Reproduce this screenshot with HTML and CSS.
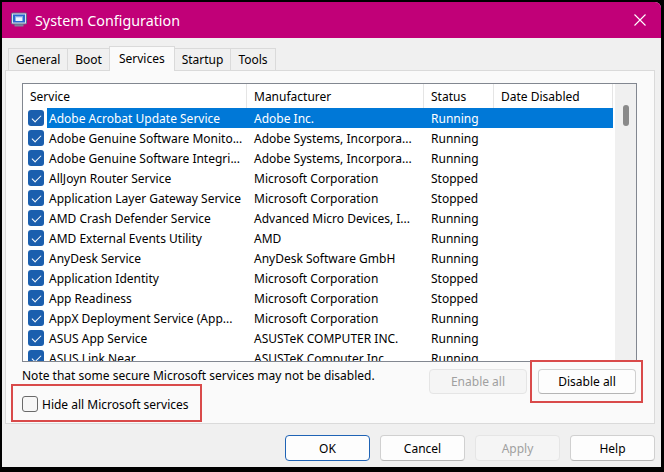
FILE: index.html
```html
<!DOCTYPE html>
<html lang="en">
<head>
    <meta charset="UTF-8">
    <title>System Configuration</title>
    <link rel="stylesheet" href="styles.css">
</head>
<body>
<div class="window">
    <div class="titlebar">
        <svg class="app-icon" viewBox="0 0 16 16">
            <rect x="3.5" y="12" width="9" height="2.5" rx="0.5" fill="#7d869a"/>
            <rect x="0.5" y="1" width="15" height="11" rx="1" fill="#dde3ef" stroke="#5e6b8a"/>
            <rect x="2" y="2.5" width="12" height="8" fill="#2a68d0"/>
            <rect x="4.5" y="4" width="7" height="5" fill="#eef3ff"/>
            <rect x="4.5" y="4" width="7" height="1.3" fill="#7fa6e6"/>
        </svg>
        <span class="title">System Configuration</span>
        <svg class="close" viewBox="0 0 12 12">
            <path d="M0.5 0.5 L11.5 11.5 M11.5 0.5 L0.5 11.5" stroke="#fff" stroke-width="1.1"/>
        </svg>
    </div>

    <div class="client">
        <div class="tabs">
            <div class="tab">General</div>
            <div class="tab">Boot</div>
            <div class="tab active">Services</div>
            <div class="tab">Startup</div>
            <div class="tab">Tools</div>
        </div>

        <div class="panel">
            <div class="listview">
                <div class="list-main">
                    <div class="list-header">
                        <div class="hcell">Service</div>
                        <div class="hcell">Manufacturer</div>
                        <div class="hcell">Status</div>
                        <div class="hcell">Date Disabled</div>
                    </div>
                    <div class="row selected"><span class="cell chk"><span class="check"></span></span><span class="cell name">Adobe Acrobat Update Service</span><span class="cell">Adobe Inc.</span><span class="cell">Running</span><span class="cell"></span></div>
                    <div class="row"><span class="cell chk"><span class="check"></span></span><span class="cell name">Adobe Genuine Software Monito...</span><span class="cell">Adobe Systems, Incorpora...</span><span class="cell">Running</span><span class="cell"></span></div>
                    <div class="row"><span class="cell chk"><span class="check"></span></span><span class="cell name">Adobe Genuine Software Integri...</span><span class="cell">Adobe Systems, Incorpora...</span><span class="cell">Running</span><span class="cell"></span></div>
                    <div class="row"><span class="cell chk"><span class="check"></span></span><span class="cell name">AllJoyn Router Service</span><span class="cell">Microsoft Corporation</span><span class="cell">Stopped</span><span class="cell"></span></div>
                    <div class="row"><span class="cell chk"><span class="check"></span></span><span class="cell name">Application Layer Gateway Service</span><span class="cell">Microsoft Corporation</span><span class="cell">Stopped</span><span class="cell"></span></div>
                    <div class="row"><span class="cell chk"><span class="check"></span></span><span class="cell name">AMD Crash Defender Service</span><span class="cell">Advanced Micro Devices, I...</span><span class="cell">Running</span><span class="cell"></span></div>
                    <div class="row"><span class="cell chk"><span class="check"></span></span><span class="cell name">AMD External Events Utility</span><span class="cell">AMD</span><span class="cell">Running</span><span class="cell"></span></div>
                    <div class="row"><span class="cell chk"><span class="check"></span></span><span class="cell name">AnyDesk Service</span><span class="cell">AnyDesk Software GmbH</span><span class="cell">Running</span><span class="cell"></span></div>
                    <div class="row"><span class="cell chk"><span class="check"></span></span><span class="cell name">Application Identity</span><span class="cell">Microsoft Corporation</span><span class="cell">Stopped</span><span class="cell"></span></div>
                    <div class="row"><span class="cell chk"><span class="check"></span></span><span class="cell name">App Readiness</span><span class="cell">Microsoft Corporation</span><span class="cell">Stopped</span><span class="cell"></span></div>
                    <div class="row"><span class="cell chk"><span class="check"></span></span><span class="cell name">AppX Deployment Service (App...</span><span class="cell">Microsoft Corporation</span><span class="cell">Running</span><span class="cell"></span></div>
                    <div class="row"><span class="cell chk"><span class="check"></span></span><span class="cell name">ASUS App Service</span><span class="cell">ASUSTeK COMPUTER INC.</span><span class="cell">Running</span><span class="cell"></span></div>
                    <div class="row"><span class="cell chk"><span class="check"></span></span><span class="cell name">ASUS Link Near</span><span class="cell">ASUSTeK Computer Inc.</span><span class="cell">Running</span><span class="cell"></span></div>
                </div>
                <div class="scrollbar"><div class="thumb"></div></div>
            </div>

            <div class="panel-footer">
                <div class="note-col">
                    <p class="note">Note that some secure Microsoft services may not be disabled.</p>
                    <label class="hide-ms"><span class="box"></span>Hide all Microsoft services</label>
                </div>
                <div class="panel-buttons">
                    <button class="btn" disabled>Enable all</button>
                    <button class="btn marked">Disable all</button>
                </div>
            </div>
        </div>

        <div class="dialog-buttons">
            <button class="btn default">OK</button>
            <button class="btn">Cancel</button>
            <button class="btn" disabled>Apply</button>
            <button class="btn">Help</button>
        </div>
    </div>
</div>
</body>
</html>
```

FILE: styles.css
```css
* { box-sizing: border-box; }
html, body { margin: 0; }
body { background: #000; width: 664px; height: 472px; overflow: hidden; font-family: "Noto Sans", "Open Sans", sans-serif; font-size: 12px; color: #000; }

.window { margin: 2px 3px 0 2px; height: 465px; background: #f0f0f0; display: flex; flex-direction: column; border-top-right-radius: 6px; overflow: hidden; }

.titlebar { height: 36px; flex: none; background: #c10078; color: #fff; display: flex; align-items: center; padding: 0 15px 0 9px; }
.app-icon { width: 16px; height: 16px; margin-right: 8px; }
.title { flex: 1; font-size: 14.3px; }
.close { width: 12px; height: 12px; }

.client { flex: 1; display: flex; flex-direction: column; padding: 8px 6px 0 3px; }

.tabs { display: flex; align-items: flex-end; height: 24px; padding-left: 3px; position: relative; z-index: 1; }
.tab { height: 22px; padding: 0 7px; border: 1px solid #dadada; border-bottom: none; margin-right: -1px; background: #f0f0f0; display: flex; align-items: center; }
.tab.active { height: 25px; margin-bottom: -1px; padding: 0 9px 2px; background: #fafafa; }

.panel { height: 354px; border: 1px solid #dadada; background: #fafafa; padding: 12px 17px 0 16px; }

.listview { height: 279px; border: 1px solid #828790; background: #fff; display: flex; }
.list-main { flex: 1; overflow: hidden; }
.list-header { display: grid; grid-template-columns: 224px 177px 70px 119px; height: 24px; }
.hcell { padding-left: 7px; line-height: 26px; height: 24px; border-right: 1px solid #e5e5e5; white-space: nowrap; }
.row { display: grid; grid-template-columns: 24px 200px 177px 70px 119px; height: 20px; }
.cell { padding-left: 7px; height: 20px; line-height: 22px; white-space: nowrap; overflow: hidden; }
.cell.chk { padding-left: 0; }
.cell.name { padding-left: 2px; }
.row.selected .cell:not(.chk) { background: #0078d7; color: #fff; }
.check { display: block; width: 16px; height: 16px; margin: 2px 0 0 5px; background: #1b5fae; border-radius: 3px; position: relative; }
.check::after { content: ""; position: absolute; left: 5.5px; top: 2.5px; width: 4px; height: 8px; border: solid #fff; border-width: 0 1.5px 1.5px 0; transform: rotate(45deg); }

.scrollbar { width: 21px; flex: none; background: #f0f0f0; }
.thumb { width: 6px; height: 21px; margin: 21px 0 0 8px; background: #8a8a8a; border-radius: 3px; }

.panel-footer { display: flex; justify-content: space-between; height: 61px; }
.note-col { display: flex; flex-direction: column; align-items: flex-start; }
.note { margin: 6px 0 0; line-height: 16px; }
.hide-ms { display: flex; align-items: center; height: 16px; margin-top: 12px; position: relative; }
.box { width: 16px; height: 16px; border: 1px solid #6a6a6a; border-radius: 3px; background: #f7f7f7; margin-right: 4px; }
.hide-ms::after { content: ""; position: absolute; left: -11px; right: -13px; top: -12px; bottom: -10px; border: 2px solid #d94a4a; }

.btn { font: inherit; color: #000; background: #fdfdfd; border: 1px solid #d0d0d0; border-bottom-color: #b5b5b5; border-radius: 4px; padding: 0; }
.btn:disabled { background: #f5f5f5; color: #a0a0a0; border-color: #e5e5e5; }
.panel-buttons { display: flex; gap: 11px; margin: 7px 1px 0 0; }
.panel-buttons .btn { width: 98px; height: 25px; }
.btn.marked { position: relative; }
.btn.marked::after { content: ""; position: absolute; left: -9px; right: -8px; top: -10px; bottom: -10px; border: 2px solid #d94a4a; }

.dialog-buttons { display: flex; justify-content: flex-end; gap: 10px; margin-top: 11px; }
.dialog-buttons .btn { width: 85px; height: 26px; }
.btn.default { border-color: #1f63b5; }
```
